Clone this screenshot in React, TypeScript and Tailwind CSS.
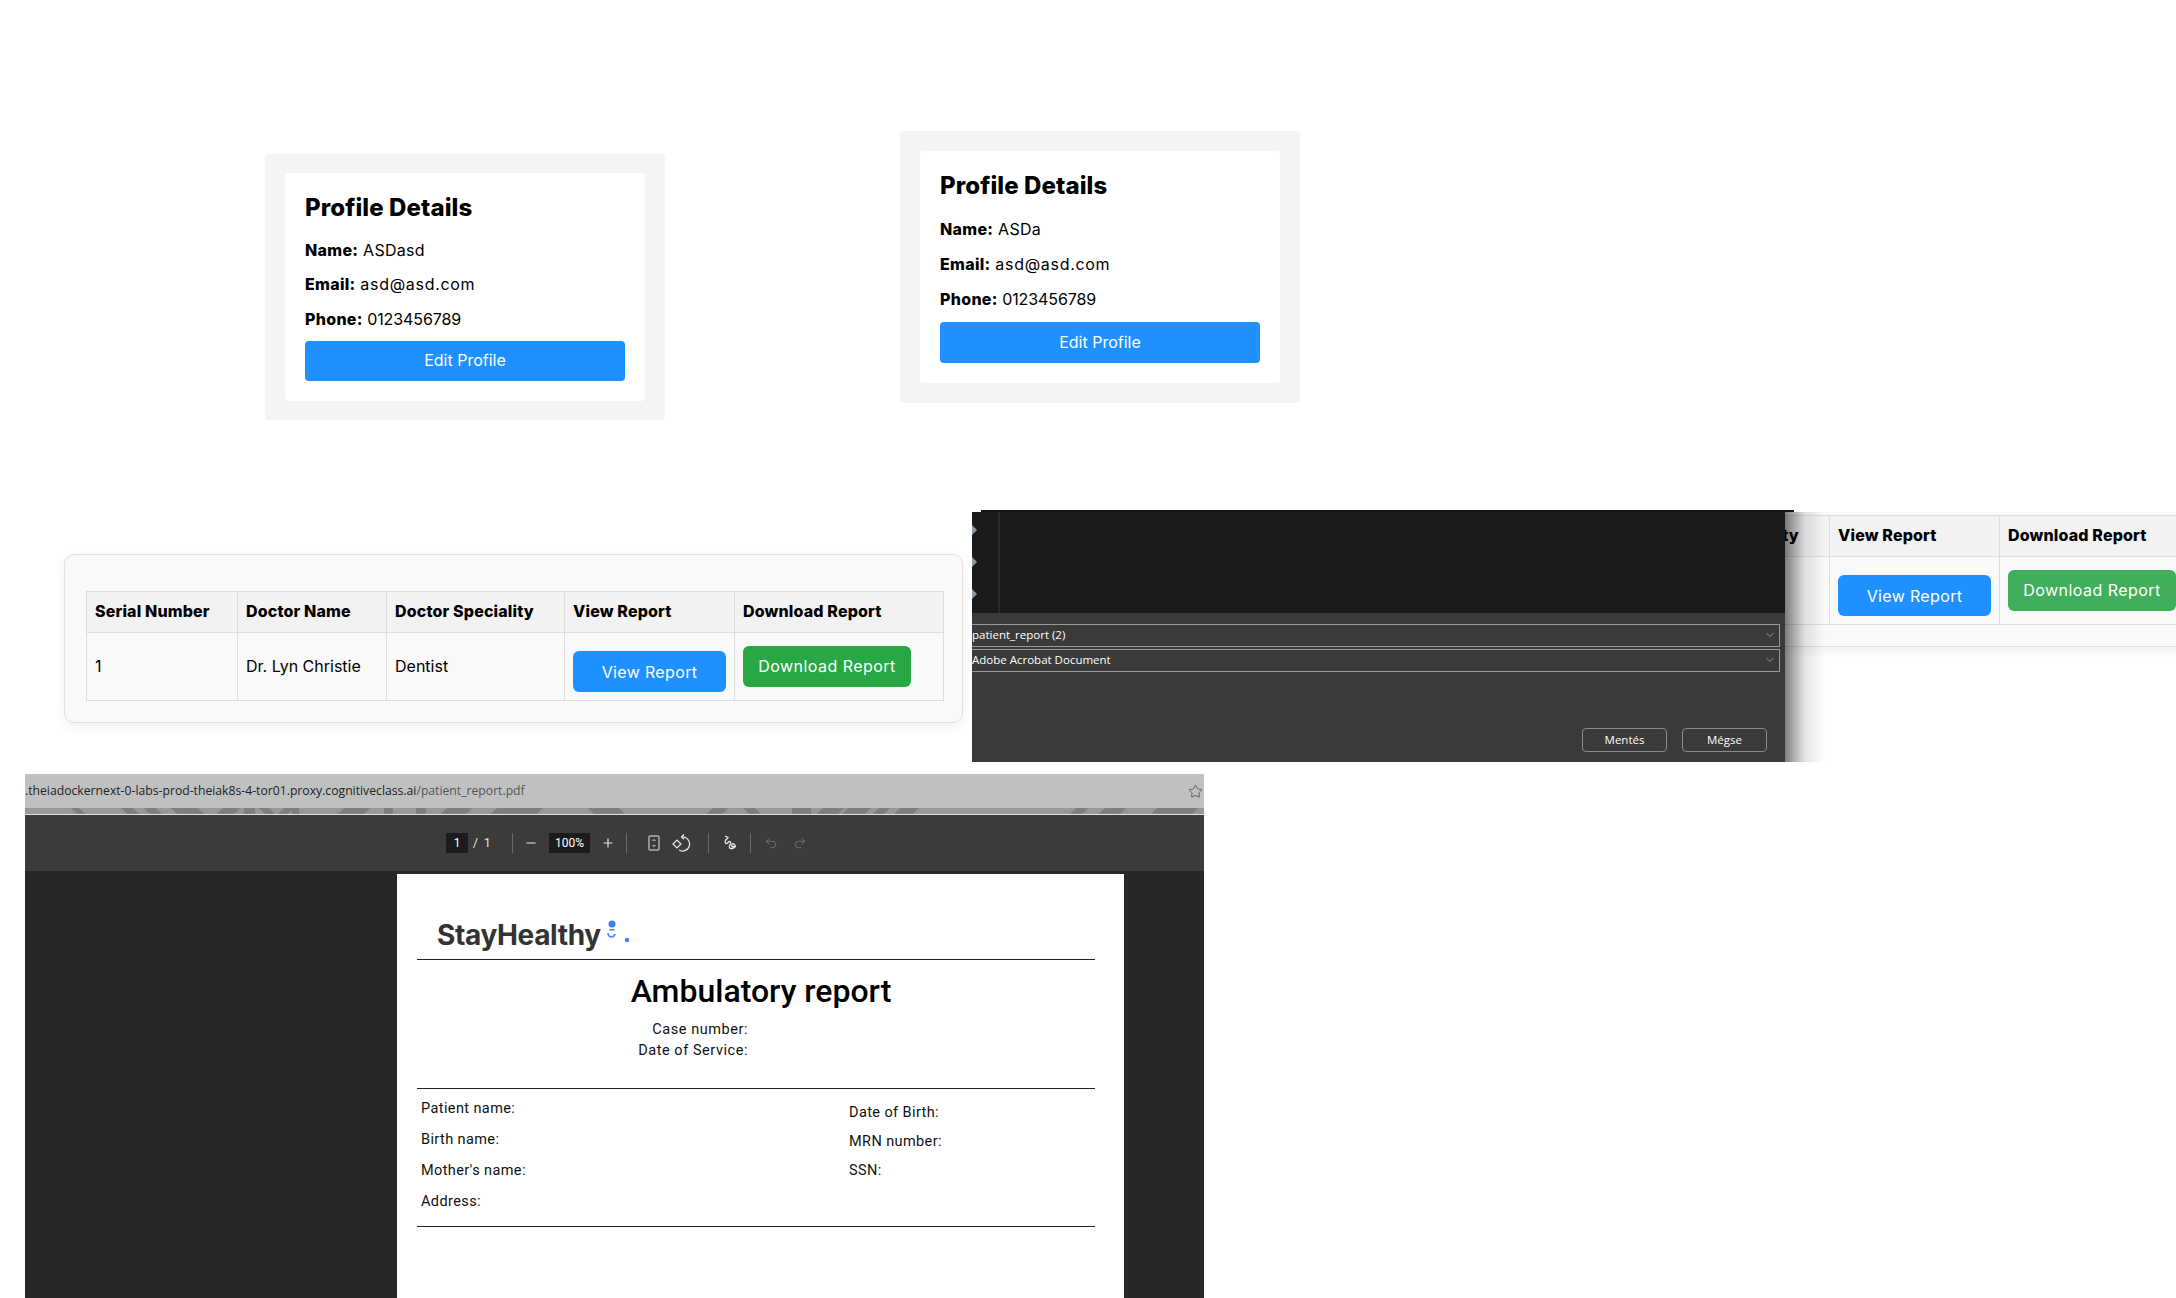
import { ChevronDown, Minus, Plus, Star, Undo2, Redo2 } from "lucide-react";

const poppins = "font-['Inter','Noto_Sans',sans-serif]";

function ProfileCard({
  name,
  className,
  buttonClassName,
  gapClassName,
  headingClassName,
}: {
  name: string;
  className: string;
  buttonClassName: string;
  gapClassName: string;
  headingClassName: string;
}) {
  return (
    <div className={`absolute w-[400px] rounded bg-[#f4f4f4] px-5 ${className}`}>
      <div className={`rounded bg-white p-5 text-black ${poppins}`}>
        <h2 className={`text-2xl leading-[30px] font-extrabold tracking-[0.1px] ${headingClassName}`}>
          Profile Details
        </h2>
        <p className={`text-base leading-6 tracking-[0.3px] ${gapClassName}`}>
          <strong className="font-extrabold">Name:</strong> {name}
        </p>
        <p className={`text-base leading-6 tracking-[0.3px] ${gapClassName}`}>
          <strong className="font-extrabold">Email:</strong> <span className="tracking-[0.7px]">asd@asd.com</span>
        </p>
        <p className={`text-base leading-6 ${gapClassName}`}>
          <strong className="font-extrabold tracking-[0.3px]">Phone:</strong>{" "}
          <span className="tracking-[-0.1px]">0123456789</span>
        </p>
        <button className={`block w-full rounded bg-[#1e90ff] pb-[2px] text-base text-white ${buttonClassName}`}>
          Edit Profile
        </button>
      </div>
    </div>
  );
}

function ReportsTable({ greenClassName }: { greenClassName: string }) {
  const th =
    "border border-[#dddddd] bg-[#f2f2f2] px-2 pt-[6px] pb-[9px] text-left text-base font-extrabold tracking-[0.15px]";
  const td = "border border-[#dddddd] px-2 py-2 text-base";
  const cellText = `${td} pb-[10px]`;
  return (
    <div
      className={`w-[899px] rounded-[10px] border border-[#e0e0e0] bg-[#f9f9f9] pt-[36px] pr-5 pb-[21px] pl-[21px] text-black shadow-[0_4px_12px_rgba(0,0,0,0.06)] ${poppins}`}
    >
      <table className="w-[857px] table-fixed border-collapse">
        <colgroup>
          <col className="w-[151px]" />
          <col className="w-[149px]" />
          <col className="w-[178px]" />
          <col className="w-[170px]" />
          <col className="w-[209px]" />
        </colgroup>
        <thead>
          <tr className="h-[41px]">
            <th className={th}>Serial Number</th>
            <th className={th}>Doctor Name</th>
            <th className={th}>Doctor Speciality</th>
            <th className={th}>View Report</th>
            <th className={th}>Download Report</th>
          </tr>
        </thead>
        <tbody>
          <tr>
            <td className={cellText}>1</td>
            <td className={cellText}>Dr. Lyn Christie</td>
            <td className={cellText}>Dentist</td>
            <td className={td}>
              <button className="mt-[10px] block h-[41px] w-full rounded-md bg-[#1e90ff] text-base tracking-[0.35px] text-white">
                View Report
              </button>
            </td>
            <td className={td}>
              <button
                className={`block h-[41px] w-[168px] rounded-md pb-[2px] text-base tracking-[0.45px] text-white ${greenClassName}`}
              >
                Download Report
              </button>
            </td>
          </tr>
        </tbody>
      </table>
    </div>
  );
}

function SaveDialog() {
  const winFont = "font-['Open_Sans','Noto_Sans',sans-serif]";
  const field = `flex h-[23px] w-[809px] items-center justify-between border border-[#9a9a9a] pr-[3px] pb-[2px] text-[11.5px] text-white -ml-px ${winFont}`;
  const btn = `h-6 w-[85px] rounded border border-[#8a8a8a] text-[11.5px] text-white ${winFont}`;
  return (
    <div className="absolute top-[510px] left-[972px] h-[252px] w-[853px]">
      <div className="ml-[9px] h-[2px] w-[813px] bg-[#161616]" />
      <div className="flex h-[250px] w-[813px] flex-col overflow-hidden bg-[#3a3a3a]">
        <div className="flex h-[101px] shrink-0 bg-[#1a1a1a]">
          <div className="flex w-[28px] flex-col gap-[22px] border-r-2 border-[#2a2a2a] pt-[13px]">
            {[0, 1, 2].map((i) => (
              <svg key={i} width="5" height="10" viewBox="0 0 5 10" className="block">
                <path d="M0 0 L5 5 L0 10 Z" fill="#8b9aa6" />
              </svg>
            ))}
          </div>
        </div>
        <div className="flex flex-1 flex-col pt-[11px]">
          <div className={field}>
            <span>patient_report (2)</span>
            <ChevronDown size={12} strokeWidth={1.2} color="#cfcfcf" />
          </div>
          <div className={`${field} mt-[2px]`}>
            <span>Adobe Acrobat Document</span>
            <ChevronDown size={12} strokeWidth={1.2} color="#cfcfcf" />
          </div>
          <div className="mt-[56px] flex justify-end gap-[15px] pr-[18px]">
            <button className={btn}>Mentés</button>
            <button className={btn}>Mégse</button>
          </div>
        </div>
      </div>
      <div className="absolute top-[2px] left-[813px] h-[250px] w-[40px] bg-gradient-to-r from-black/50 via-black/10 to-transparent" />
    </div>
  );
}

function Sep({ className }: { className: string }) {
  return <div className={`h-5 w-px bg-[#6a6a6a] ${className}`} />;
}

function PdfToolbar() {
  const box = "flex h-5 items-center justify-center bg-[#1c1c1c] text-[12px] text-white";
  return (
    <div className="flex h-[56px] shrink-0 items-center bg-[#3b3b3b] pl-[421px] font-['Roboto',sans-serif] text-[#e8e8e8]">
      <div className={`${box} w-[22px]`}>1</div>
      <div className="ml-[5px] w-[39px] text-[12px]">/&nbsp;&nbsp;1</div>
      <Sep className="" />
      <Minus size={14} strokeWidth={2} className="ml-[11px]" />
      <div className={`${box} ml-[11px] w-[41px]`}>100%</div>
      <Plus size={14} strokeWidth={2} className="ml-[11px]" />
      <Sep className="ml-[11px]" />
      <svg width="16" height="18" viewBox="0 0 16 18" fill="none" stroke="#e8e8e8" className="ml-[19px]">
        <rect x="3" y="2" width="10" height="14" rx="0.5" />
        <path d="M6.5 7 L8 5.5 L9.5 7 M6.5 11 L8 12.5 L9.5 11" />
      </svg>
      <svg width="20" height="18" viewBox="0 0 20 18" fill="none" stroke="#e8e8e8" strokeWidth="1.2" className="ml-[9px]">
        <path d="M2 10 L6 6 L10 10 L6 14 Z" />
        <path d="M11 3 A7 7 0 1 1 8 16" />
        <path d="M13 0.5 L10.5 3 L13 5.2" />
      </svg>
      <Sep className="ml-[17px]" />
      <svg width="18" height="18" viewBox="0 0 18 18" fill="none" stroke="#e8e8e8" strokeWidth="1.3" className="ml-[12px]">
        <path d="M4 2 L7 3.5 L4.5 6.5 C3 9 5 10.5 7 8.5 C9 6.5 10.5 8 9 10.5 C7.5 13 8.5 15 11 14.5 C14 14 15 11.5 13 10 C11 9 9.5 11.5 11 12.5 L15 12.5" />
      </svg>
      <Sep className="ml-[11px]" />
      <Undo2 size={14} strokeWidth={1.4} color="#7a7a7a" className="ml-[13px]" />
      <Redo2 size={14} strokeWidth={1.4} color="#7a7a7a" className="ml-[15px]" />
    </div>
  );
}

// the blurred wallpaper that shows between the address bar and the pdf toolbar
const stripes = [
  [52, 60, -1],
  [102, 114, -1],
  [125, 137, -1],
  [152, 179, -1],
  [192, 209, 1],
  [219, 230, 0],
  [240, 250, -1],
  [253, 263, 1],
  [267, 274, 0],
  [313, 339, 1],
  [359, 368, 0],
  [391, 401, 0],
  [416, 441, 1],
  [466, 512, 1],
  [569, 600, -1],
  [682, 697, 1],
  [724, 736, -1],
  [767, 786, 0],
  [792, 813, 1],
  [817, 840, 1],
  [848, 859, 1],
  [869, 888, 1],
  [1045, 1057, 1],
  [1074, 1095, 1],
  [1126, 1167, 1],
];

function PdfWindow() {
  const label = "text-[14.5px] leading-5 tracking-[0.4px] text-[#111111]";
  return (
    <div className="absolute top-[774px] left-[25px] flex h-[524px] w-[1179px] flex-col">
      <div className="flex h-[34px] shrink-0 items-center justify-between bg-[#bfc1c0] pr-[1px] font-['Open_Sans',sans-serif] text-[12.2px]">
        <span className="whitespace-nowrap text-[#222222]">
          .theiadockernext-0-labs-prod-theiak8s-4-tor01.proxy.cognitiveclass.ai
          <span className="text-[#555555]">/patient_report.pdf</span>
        </span>
        <Star size={15} strokeWidth={1.6} color="#5f6060" />
      </div>
      <svg width="1179" height="6" viewBox="0 0 1179 6" className="block shrink-0 bg-[#979897]">
        {stripes.map(([a, b, lean]) => (
          <path key={a} d={`M${a + lean * 6} 0 H${b + lean * 6} L${b} 6 H${a} Z`} fill="#7e7f7e" />
        ))}
      </svg>
      <div className="h-px shrink-0 bg-[#e2e2e2]" />
      <PdfToolbar />
      <div className="flex-1 overflow-hidden bg-[#272727] pt-[3px] pl-[372px]">
        <div className="h-full w-[727px] bg-white pr-[29px] pl-[20px] font-['Roboto',sans-serif] text-black">
          <div className="flex h-[86px] items-end border-b-[1.5px] border-[#222222] pb-[5px] pl-[20px]">
            <span className="font-['Inter',sans-serif] text-[28px] leading-[38px] font-bold tracking-[-0.35px] text-[#333333]">
              StayHealthy
            </span>
            <svg width="30" height="30" viewBox="0 0 30 30" className="mb-[5px] ml-[2px]">
              <circle cx="9" cy="5" r="3.5" fill="#3b82f6" />
              <rect x="6.5" y="10" width="5" height="1.5" fill="#3b82f6" />
              <path d="M5 14 C5 19 11 19 12 15" fill="none" stroke="#3b82f6" strokeWidth="1.5" />
              <circle cx="24" cy="21" r="2.2" fill="#3b82f6" />
            </svg>
          </div>
          <h1 className="mt-[9px] pl-[10px] text-center text-[32px] leading-[44px] font-medium">Ambulatory report</h1>
          <div className="mt-[6px] w-[331px] text-right text-[14.5px] leading-[21px] tracking-[0.55px] text-[#111111]">
            <p>Case number:</p>
            <p>Date of Service:</p>
          </div>
          <div className="mt-[27px] grid h-[139px] grid-cols-[428px_1fr] border-y-[1.5px] border-[#222222] pl-[4px]">
            <div className={`flex flex-col gap-[11px] pt-[10px] ${label}`}>
              <p>Patient name:</p>
              <p>Birth name:</p>
              <p>Mother's name:</p>
              <p>Address:</p>
            </div>
            <div className={`flex flex-col gap-[9px] pt-[14px] ${label}`}>
              <p>Date of Birth:</p>
              <p>MRN number:</p>
              <p>SSN:</p>
            </div>
          </div>
        </div>
      </div>
    </div>
  );
}

export default function App() {
  return (
    <div className="relative h-[1298px] w-[2176px] overflow-hidden bg-white">
      <ProfileCard
        name="ASDasd"
        className="top-[154px] left-[265px] py-[19px]"
        buttonClassName="h-10"
        gapClassName="mb-[10.33px]"
        headingClassName="mb-[15px]"
      />
      <ProfileCard
        name="ASDa"
        className="top-[131px] left-[900px] py-5"
        buttonClassName="h-[41px]"
        gapClassName="mb-[11px]"
        headingClassName="mb-[16px]"
      />

      <div className="absolute top-[554px] left-[64px]">
        <ReportsTable greenClassName="bg-[#28a745]" />
      </div>

      {/* second shot of the same table, cropped by the dialog on top */}
      <div className="absolute top-[512px] left-[1300px] h-[250px] w-[876px] overflow-hidden">
        <div className="-mt-[34px] ml-[29px]">
          <ReportsTable greenClassName="bg-[#40ae5a]" />
        </div>
      </div>

      <SaveDialog />
      <PdfWindow />
    </div>
  );
}
